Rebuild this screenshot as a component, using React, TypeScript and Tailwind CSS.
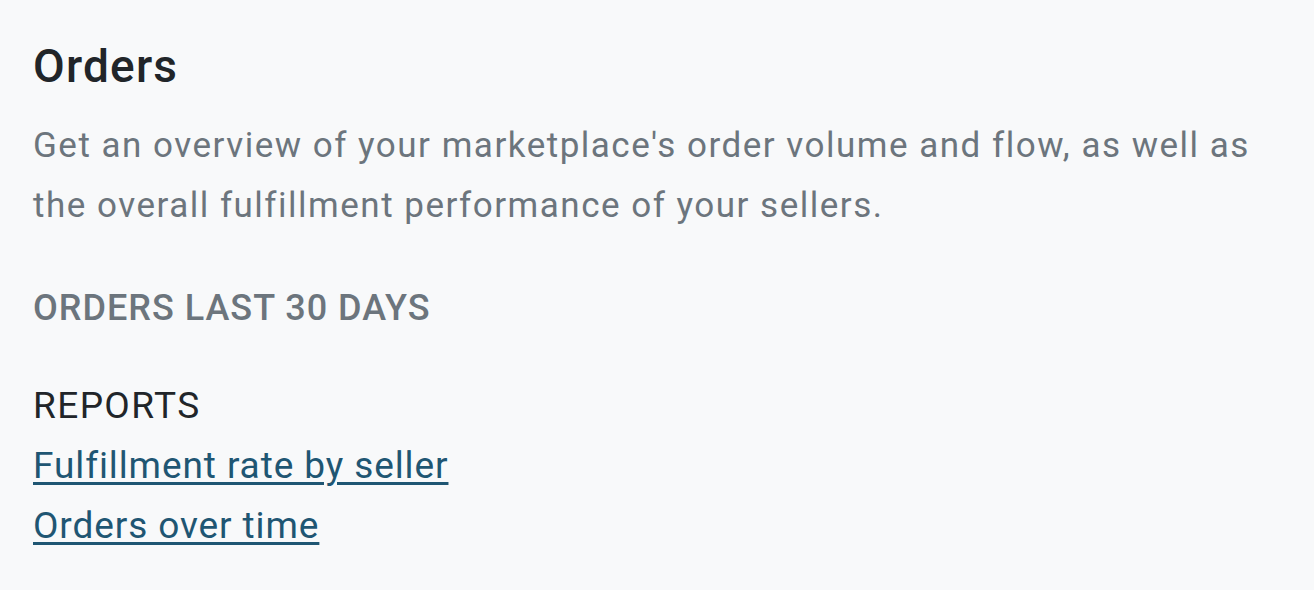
import React from "react";

export default function App() {
  return (
    <div
      className="min-h-[590px] w-full bg-[#f8f9fa] pl-[33px] pr-[40px] pt-[38px]"
      style={{ fontFamily: "Roboto, 'Noto Sans', sans-serif" }}
    >
      <h1 className="text-[46px] font-medium leading-[56px] tracking-[1.2px] text-[#212529]">Orders</h1>
      <p className="mt-[22px] max-w-[1240px] text-[35px] leading-[60px] tracking-[1.5px] text-[#6c757d]">
        Get an overview of your marketplace's order volume and flow, as well as the overall
        fulfillment performance of your sellers.
      </p>
      <h2 className="mt-[48px] text-[36px] font-medium leading-[48px] tracking-[1px] text-[#6c757d]">
        ORDERS LAST 30 DAYS
      </h2>
      <h3 className="mt-[50px] text-[37px] leading-[48px] tracking-[1.4px] text-[#212529]">REPORTS</h3>
      <div className="mt-[6px] flex flex-col text-[37px] leading-[60px] tracking-[0.9px]">
        <a href="#" className="self-start text-[#1f5673] underline decoration-[3px] underline-offset-[4px]">
          Fulfillment rate by seller
        </a>
        <a href="#" className="self-start text-[#1f5673] underline decoration-[3px] underline-offset-[4px]">
          Orders over time
        </a>
      </div>
    </div>
  );
}
